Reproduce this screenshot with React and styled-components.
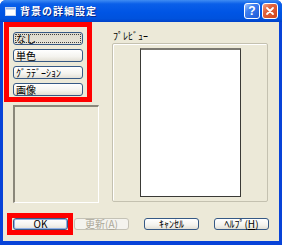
import React from "react";
import styled, { createGlobalStyle } from "styled-components";

const Global = createGlobalStyle`
  html, body { margin: 0; padding: 0; background: #ffffff; }
  body { font-family: "Noto Sans CJK JP", "Noto Sans", sans-serif; }
`;

const Window = styled.div`
  width: 282px;
  height: 245px;
  box-sizing: border-box;
  display: flex;
  flex-direction: column;
  background: #0843d8;
  border-radius: 6px 6px 0 0;
  overflow: hidden;
`;

const TitleBar = styled.div`
  height: 22px;
  flex: none;
  display: flex;
  align-items: center;
  padding: 0 4px 0 5px;
  background: linear-gradient(180deg, #3f8cf3 0%, #0a5fe9 18%, #0055e5 55%, #0052dd 85%, #0041c8 100%);
`;

const TitleIcon = styled.svg`
  width: 11px;
  height: 9px;
  flex: none;
`;

const TitleText = styled.div`
  margin-left: 4px;
  flex: 1;
  color: #ffffff;
  font-size: 10px;
  font-weight: 700;
  line-height: 12px;
  letter-spacing: 1px;
  text-shadow: 1px 1px 0 #0b2a8a;
  white-space: nowrap;
`;

const CaptionButton = styled.div`
  width: 16px;
  height: 16px;
  box-sizing: border-box;
  border: 1px solid #ffffff;
  border-radius: 3px;
  display: flex;
  align-items: center;
  justify-content: center;
  margin-left: ${(p) => (p.$gap ? "2px" : "0")};
  background: ${(p) =>
    p.$close
      ? "linear-gradient(135deg, #f0a58c 0%, #e2643f 35%, #cf4419 100%)"
      : "linear-gradient(135deg, #a8c6fb 0%, #3f7ff0 35%, #1d58d6 100%)"};
  color: #ffffff;
  font-family: "Liberation Sans", Arial, sans-serif;
  font-weight: 700;
  font-size: 12px;
  line-height: 1;
`;

const Client = styled.div`
  flex: 1;
  margin: 0 3px 4px 3px;
  background: #ece9d8;
  display: flex;
  flex-direction: column;
  font-size: 10px;
  color: #000000;
`;

const TopSection = styled.div`
  display: flex;
  align-items: flex-start;
`;

const LeftColumn = styled.div`
  display: flex;
  flex-direction: column;
  padding-left: 1px;
`;

const RedFrame = styled.div`
  box-sizing: border-box;
  border: 5px solid #ff0000;
  display: flex;
  flex-direction: column;
  gap: ${(p) => p.$gap || 0}px;
  padding: ${(p) => p.$pad};
  width: ${(p) => p.$w}px;
`;

const XPButton = styled.div`
  position: relative;
  box-sizing: border-box;
  width: ${(p) => p.$w}px;
  height: ${(p) => p.$h}px;
  border: 1px solid ${(p) => (p.$disabled ? "#c4c2b6" : "#365985")};
  border-radius: 3px;
  display: flex;
  align-items: center;
  justify-content: ${(p) => (p.$left ? "flex-start" : "center")};
  padding-left: ${(p) => (p.$left ? "2px" : "0")};
  background: ${(p) =>
    p.$disabled
      ? "#f4f3ee"
      : p.$pressed
      ? "linear-gradient(180deg, #dcd9cc 0%, #e6e3d7 100%)"
      : "linear-gradient(180deg, #ffffff 0%, #f4f3ee 60%, #e3e0d6 100%)"};
  box-shadow: ${(p) => (p.$default ? "inset 0 0 0 1px #8fb0e6" : "none")};
  color: ${(p) => (p.$disabled ? "#aca899" : "#000000")};
  font-size: 10px;
  line-height: 12px;
  white-space: nowrap;
  flex: none;

  &::after {
    content: "";
    display: ${(p) => (p.$focus ? "block" : "none")};
    position: absolute;
    inset: 1px;
    border: 1px dotted #404040;
  }
`;

const Mnemonic = styled.span`
  text-decoration: underline;
`;

const ListBox = styled.div`
  box-sizing: border-box;
  margin-top: 3px;
  margin-left: 9px;
  width: 86px;
  height: 98px;
  background: #ece9d8;
  border-top: 2px solid #8a877a;
  border-left: 2px solid #8a877a;
  border-right: 1px solid #ffffff;
  border-bottom: 1px solid #ffffff;
`;

const RightColumn = styled.div`
  display: flex;
  flex-direction: column;
  margin-left: 13px;
  padding-top: 8px;
`;

const GroupLabel = styled.div`
  font-size: 10px;
  line-height: 12px;
  height: 12px;
  padding-left: 1px;
`;

const GroupBox = styled.div`
  box-sizing: border-box;
  margin-top: 1px;
  width: 156px;
  height: 159px;
  border: 1px solid #c4c1b0;
  border-radius: 2px;
  box-shadow: inset 1px 1px 0 #ffffff;
  display: flex;
  justify-content: center;
  padding-top: 4px;
`;

const PreviewPaper = styled.div`
  box-sizing: border-box;
  width: 101px;
  height: 149px;
  background: #ffffff;
  border: 1px solid #3a3a36;
  border-top: 2px solid #7c7a72;
`;

const BottomRow = styled.div`
  margin-top: auto;
  display: flex;
  align-items: center;
  padding: 0 0 6px 4px;
`;

const ButtonSlot = styled.div`
  margin-left: ${(p) => p.$ml}px;
  display: flex;
`;

export default function App() {
  return (
    <>
      <Global />
      <Window>
        <TitleBar>
          <TitleIcon viewBox="0 0 11 9">
            <rect x="0.5" y="0.5" width="10" height="8" fill="#ffffff" stroke="#c9d6f0" />
            <rect x="1" y="1" width="9" height="1.5" fill="#9fb8e8" />
          </TitleIcon>
          <TitleText>背景の詳細設定</TitleText>
          <CaptionButton>?</CaptionButton>
          <CaptionButton $close $gap>
            <svg width="10" height="10" viewBox="0 0 10 10">
              <path d="M2 2 L8 8 M8 2 L2 8" stroke="#ffffff" strokeWidth="1.8" strokeLinecap="round" />
            </svg>
          </CaptionButton>
        </TitleBar>
        <Client>
          <TopSection>
            <LeftColumn>
              <RedFrame $w={88} $gap={4} $pad="5px 4px 1px 4px">
                <XPButton $w={70} $h={13} $left $pressed $focus>なし</XPButton>
                <XPButton $w={70} $h={13} $left>単色</XPButton>
                <XPButton $w={70} $h={13} $left>ｸﾞﾗﾃﾞｰｼｮﾝ</XPButton>
                <XPButton $w={70} $h={13} $left>画像</XPButton>
              </RedFrame>
              <ListBox />
            </LeftColumn>
            <RightColumn>
              <GroupLabel>ﾌﾟﾚﾋﾞｭｰ</GroupLabel>
              <GroupBox>
                <PreviewPaper />
              </GroupBox>
            </RightColumn>
          </TopSection>
          <BottomRow>
            <RedFrame $w={66} $pad="0 0 0 1px">
              <XPButton $w={55} $h={12} $default>OK</XPButton>
            </RedFrame>
            <ButtonSlot $ml={1}>
              <XPButton $w={55} $h={12} $disabled>
                更新(<Mnemonic>A</Mnemonic>)
              </XPButton>
            </ButtonSlot>
            <ButtonSlot $ml={15}>
              <XPButton $w={55} $h={12}>ｷｬﾝｾﾙ</XPButton>
            </ButtonSlot>
            <ButtonSlot $ml={15}>
              <XPButton $w={55} $h={12}>
                ﾍﾙﾌﾟ(<Mnemonic>H</Mnemonic>)
              </XPButton>
            </ButtonSlot>
          </BottomRow>
        </Client>
      </Window>
    </>
  );
}
